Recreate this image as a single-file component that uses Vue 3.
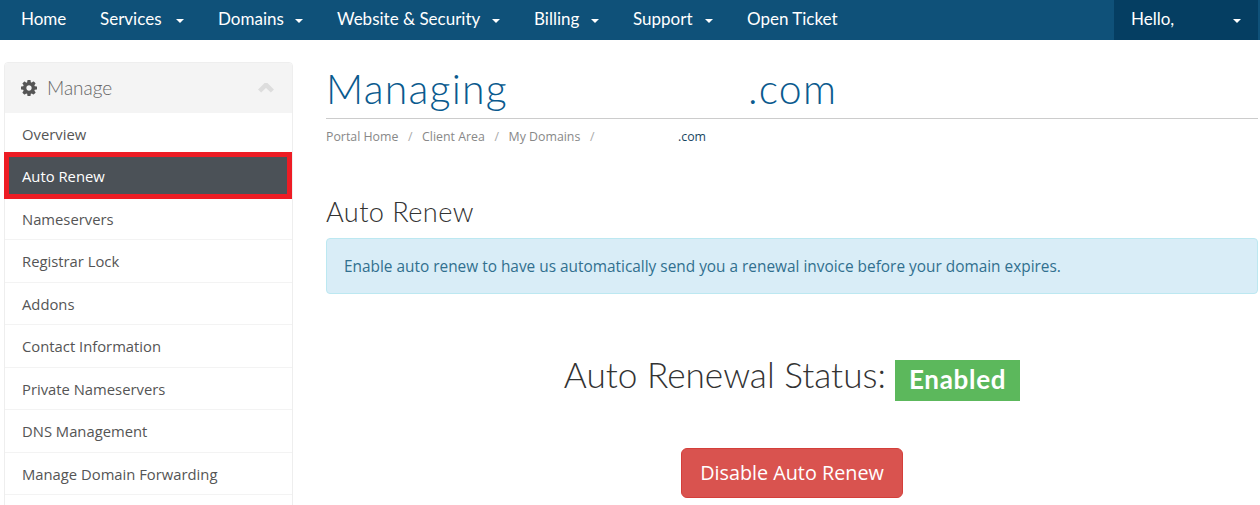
<script setup>
const navItems = [
  { label: 'Home', width: 79, caret: false },
  { label: 'Services', width: 118, caret: true },
  { label: 'Domains', width: 119, caret: true },
  { label: 'Website & Security', width: 197, caret: true },
  { label: 'Billing', width: 99, caret: true },
  { label: 'Support', width: 114, caret: true },
  { label: 'Open Ticket', width: 120, caret: false }
]
const menu = ['Overview', 'Auto Renew', 'Nameservers', 'Registrar Lock', 'Addons', 'Contact Information', 'Private Nameservers', 'DNS Management', 'Manage Domain Forwarding', '']
</script>

<template>
  <div class="page">
    <nav class="nav">
      <div class="nav-links">
        <a v-for="item in navItems" :key="item.label" class="nav-item" :class="{ 'has-caret': item.caret }" :style="{ width: item.width + 'px' }">
          <span class="nav-text">{{ item.label }}</span>
          <i v-if="item.caret" class="caret"></i>
        </a>
      </div>
      <a class="hello"><span class="nav-text">Hello,</span><i class="caret"></i></a>
    </nav>
    <div class="body">
      <aside class="sidebar">
        <div class="side-head">
          <svg class="gear" viewBox="128 128 1536 1536" aria-hidden="true"><path d="M1152 896q0-106-75-181t-181-75-181 75-75 181 75 181 181 75 181-75 75-181zm512-109v222q0 12-8 23t-20 13l-185 28q-19 54-39 91 35 50 107 138 10 12 10 25t-9 23q-27 37-99 108t-94 71q-12 0-26-9l-138-108q-44 23-91 38-16 136-29 186-7 28-36 28h-222q-14 0-24.5-8.5t-11.5-21.5l-28-184q-49-16-90-37l-141 107q-10 9-25 9-14 0-25-11-126-114-165-168-7-10-7-23 0-12 8-23 15-21 51-66.5t54-70.5q-27-50-41-99l-183-27q-13-2-21-12.5t-8-23.5v-222q0-12 8-23t19-13l186-28q14-46 39-92-40-57-107-138-10-12-10-24 0-10 9-23 26-36 98.5-107.5t94.5-71.5q13 0 26 10l138 107q44-23 91-38 16-136 29-186 7-28 36-28h222q14 0 24.5 8.5t11.5 21.5l28 184q49 16 90 37l142-107q9-9 24-9 13 0 25 10 129 119 165 170 7 8 7 22 0 12-8 23-15 21-51 66.5t-54 70.5q26 50 41 98l183 28q13 2 21 12.5t8 23.5z"/></svg>
          <span class="side-title">Manage</span>
          <svg class="chev" viewBox="0 0 16 10" aria-hidden="true"><polyline points="1.6,8 8,1.8 14.4,8" fill="none" stroke="#ddd" stroke-width="4.5"/></svg>
        </div>
        <a v-for="m in menu" :key="m" class="side-item" :class="{ active: m === 'Auto Renew' }">{{ m }}</a>
      </aside>
      <main class="main">
        <h1 class="title"><span>Managing</span><span class="gap-lg"></span><span>.com</span></h1>
        <div class="crumbs">
          <a>Portal Home</a><i>/</i><a>Client Area</a><i>/</i><a>My Domains</a><i>/</i><span class="gap-sm"></span><b>.com</b>
        </div>
        <h2 class="sub">Auto Renew</h2>
        <div class="alert">Enable auto renew to have us automatically send you a renewal invoice before your domain expires.</div>
        <div class="status"><span class="status-text">Auto Renewal Status:</span><span class="label">Enabled</span></div>
        <div class="action"><button class="btn">Disable Auto Renew</button></div>
      </main>
    </div>
  </div>
</template>

<style>
html, body { margin: 0; overflow: hidden; background: #fff; }
</style>

<style scoped>
.page {
  width: 1260px;
  height: 505px;
  overflow: hidden;
  font-family: "Open Sans", "Liberation Sans", sans-serif;
}
.nav {
  height: 40px;
  background: #0f5179;
  display: flex;
  justify-content: space-between;
  padding-right: 2px;
  color: #fff;
  font-family: Lato, "Open Sans", sans-serif;
  font-size: 17px;
}
.nav-links { display: flex; padding-left: 21px; }
.nav-text { padding-bottom: 4px; }
.nav-item {
  display: flex;
  align-items: center;
  justify-content: space-between;
  box-sizing: border-box;
}
.nav-item.has-caret { padding-right: 34px; }
.caret {
  width: 0;
  height: 0;
  border-left: 4px solid transparent;
  border-right: 4px solid transparent;
  border-top: 4px solid #fff;
  margin-top: 2px;
}
.hello {
  width: 144px;
  box-sizing: border-box;
  padding: 0 17px;
  background: #053e62;
  display: flex;
  align-items: center;
  justify-content: space-between;
}
.body { display: flex; padding: 22px 2px 0 4px; }
.sidebar {
  width: 289px;
  box-sizing: border-box;
  flex: none;
  border: 1px solid #eee;
  border-radius: 4px 4px 0 0;
  align-self: flex-start;
}
.side-head {
  height: 49.5px;
  background: #f4f4f4;
  display: flex;
  align-items: center;
  padding: 0 18px 0 16px;
  border-radius: 3px 3px 0 0;
}
.gear { width: 16px; height: 16px; fill: #555; margin-right: 10px; }
.side-title {
  font-family: Lato, sans-serif;
  font-weight: 300;
  font-size: 19px;
  color: #666;
  flex: 1;
}
.chev { width: 16px; height: 10px; }
.side-item {
  display: flex;
  align-items: center;
  height: 42.5px;
  box-sizing: border-box;
  padding: 1px 0 0 17px;
  font-size: 14.8px;
  color: #555;
  border-bottom: 1px solid #f3f3f3;
  position: relative;
}
.side-item.active { color: #fff; background: #4b5157; }
.side-item.active::after {
  content: "";
  position: absolute;
  left: -1px;
  right: 0;
  top: -3px;
  bottom: -2px;
  border: 5px solid #ed1c24;
  pointer-events: none;
}
.main { margin-left: 33px; flex: 1; min-width: 0; }
.title {
  margin: 0;
  height: 52px;
  padding-bottom: 4px;
  border-bottom: 1px solid #ccc;
  display: flex;
  align-items: center;
  font-family: Lato, sans-serif;
  font-weight: 300;
  font-size: 41px;
  letter-spacing: 1.2px;
  color: #0a5a8e;
  box-sizing: content-box;
}
.gap-lg { width: 240px; }
.crumbs {
  display: flex;
  align-items: center;
  height: 35px;
  font-size: 12.35px;
  color: #888;
}
.crumbs i { font-style: normal; color: #aaa; margin: 0 9.6px; }
.crumbs b { font-weight: 400; color: #18465f; }
.gap-sm { width: 74px; }
.sub {
  margin: 42px 0 0;
  font-family: Lato, sans-serif;
  font-weight: 300;
  font-size: 27.2px;
  letter-spacing: 0.4px;
  line-height: 32px;
  color: #333;
}
.alert {
  margin-top: 10px;
  height: 56px;
  box-sizing: border-box;
  display: flex;
  align-items: center;
  padding: 0 17px;
  background: #d9edf7;
  border: 1px solid #bce8f1;
  border-radius: 4px;
  color: #31708f;
  font-size: 15.4px;
}
.status {
  margin-top: 66px;
  display: flex;
  justify-content: center;
  align-items: center;
  gap: 9px;
  height: 41px;
  font-family: Lato, sans-serif;
  font-weight: 300;
  font-size: 35.2px;
  color: #333;
}
.status-text { padding-bottom: 14px; }
.label {
  background: #5cb85c;
  color: #fff;
  font-weight: 700;
  font-size: 26px;
  letter-spacing: 0.7px;
  height: 41px;
  box-sizing: border-box;
  padding: 0 14px 4px;
  display: flex;
  align-items: center;
}
.action { margin-top: 47px; display: flex; justify-content: center; }
.btn {
  width: 222px;
  height: 50px;
  background: #d9534f;
  border: 1px solid #d43f3a;
  border-radius: 6px;
  color: #fff;
  font-family: "Open Sans", sans-serif;
  font-size: 19.8px;
  padding: 0 0 2px;
}
</style>
